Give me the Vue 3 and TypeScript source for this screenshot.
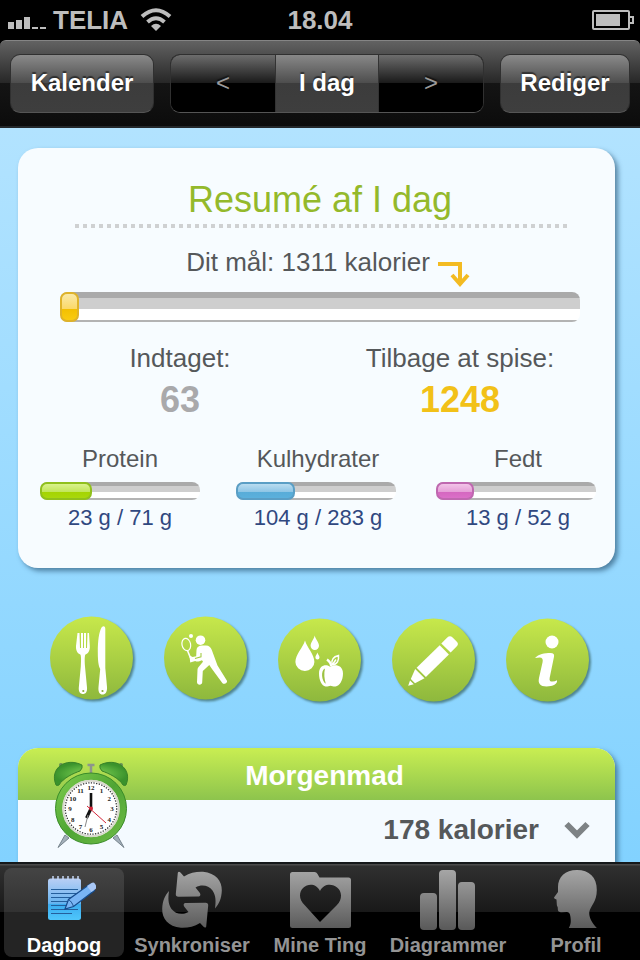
<script setup lang="ts">
import { ref } from 'vue'

interface Macro {
  name: string
  tone: string
  percent: number
  amount: string
}

const macros: Macro[] = [
  { name: 'Protein', tone: 'green', percent: 32.5, amount: '23 g / 71 g' },
  { name: 'Kulhydrater', tone: 'blue', percent: 36.8, amount: '104 g / 283 g' },
  { name: 'Fedt', tone: 'pink', percent: 24, amount: '13 g / 52 g' },
]
const intakePercent = 3.7

const actions = [
  { id: 'food', label: 'Mad', cy: 42 },
  { id: 'sport', label: 'Motion', cy: 42 },
  { id: 'water', label: 'Vand og frugt', cy: 44 },
  { id: 'note', label: 'Notat', cy: 44 },
  { id: 'info', label: 'Info', cy: 44 },
]

const tabs = [
  { id: 'diary', label: 'Dagbog' },
  { id: 'sync', label: 'Synkroniser' },
  { id: 'things', label: 'Mine Ting' },
  { id: 'charts', label: 'Diagrammer' },
  { id: 'profile', label: 'Profil' },
]
const activeTab = ref('diary')

const hours = Array.from({ length: 12 }, (_, i) => {
  const angle = ((i + 1) * Math.PI) / 6
  return { n: i + 1, x: 38 + 21 * Math.sin(angle), y: 50 - 21 * Math.cos(angle) }
})
</script>

<template>
  <div class="phone">
    <div class="status">
      <div class="carrier">
        <svg class="signal" width="38" height="14" viewBox="0 0 38 14" aria-hidden="true">
          <path d="M0 7h6v7H0zM8 5h6v9H8zM16 2h6v12h-6zM24 12h6v2h-6zM32 12h6v2h-6z" />
        </svg>
        <span>TELIA</span>
        <svg class="wifi" width="32" height="24" viewBox="0 0 32 24" aria-hidden="true">
          <path d="M2 8.500Q16-4 30 8.500M7.500 14Q16 6.500 24.500 14" fill="none" stroke="#bdbdbd" stroke-width="4" />
          <path d="M16 23l-5-5q5-4.500 10 0z" />
        </svg>
      </div>
      <span>18.04</span>
      <svg class="battery" width="42" height="20" viewBox="0 0 42 20" aria-hidden="true">
        <rect x="1" y="1" width="36" height="18" rx="1" fill="none" stroke="#bdbdbd" stroke-width="2" />
        <path d="M4 4h24v12H4z" />
        <path d="M37 7h4v6h-4" fill="none" stroke="#bdbdbd" stroke-width="2" />
      </svg>
    </div>

    <header class="nav">
      <button type="button" class="glossy">Kalender</button>
      <div class="segments">
        <button type="button" class="arrow">&lt;</button>
        <button type="button" class="current">I dag</button>
        <button type="button" class="arrow">&gt;</button>
      </div>
      <button type="button" class="glossy">Rediger</button>
    </header>

    <main>
      <section class="card">
        <h1>Resumé af I dag</h1>
        <div class="dots"></div>
        <div class="goal">
          <span>Dit mål: 1311 kalorier</span>
          <svg width="32" height="26" viewBox="0 0 32 26" aria-hidden="true">
            <path d="M0 2h22v20M14 13l8 9 8-9" fill="none" stroke="#f3bb22" stroke-width="4" />
          </svg>
        </div>
        <div class="bar large" role="progressbar" aria-label="Indtaget" :aria-valuenow="63" :aria-valuemax="1311">
          <div class="fill yellow" :style="{ width: intakePercent + '%' }"></div>
        </div>
        <div class="totals">
          <div><p>Indtaget:</p><strong>63</strong></div>
          <div class="left"><p>Tilbage at spise:</p><strong>1248</strong></div>
        </div>
        <div class="macros">
          <div v-for="m in macros" :key="m.name" class="macro">
            <p>{{ m.name }}</p>
            <div class="bar" role="progressbar" :aria-label="m.name" :aria-valuenow="m.percent">
              <div class="fill" :class="m.tone" :style="{ width: m.percent + '%' }"></div>
            </div>
            <p class="amount">{{ m.amount }}</p>
          </div>
        </div>
      </section>

      <div class="actions">
        <button v-for="a in actions" :key="a.id" type="button" :aria-label="a.label">
          <svg width="84" height="88" viewBox="0 0 84 88" aria-hidden="true">
            <defs>
              <linearGradient :id="'disc-' + a.id" x1="0" y1="0" x2="0" y2="1">
                <stop offset="0" stop-color="#c7e84b" />
                <stop offset="1" stop-color="#8eb83d" />
              </linearGradient>
            </defs>
            <circle class="disc" cx="41.500" :cy="a.cy" r="41.500" :fill="`url(#disc-${a.id})`" />
            <g v-if="a.id === 'food'" fill="#fff">
              <path d="M27.500 17h2l.5 15h1V17h2v15h1V17h2v15h1l.5-15h1.500l.8 13c.3 5-1.800 7.500-4.300 8.500-.9 1-.9 5-.5 12l2 21c.4 4.500-1.500 6.500-4 6.500s-4.600-2-4.200-6.500l2-21c.4-7 .4-11-.5-12-2.500-1-4.600-3.500-4.300-8.500z" />
              <path d="M51.500 11.500c2-2.200 3.800-1.500 3.800 1.500v39l1.700 19c.4 5-1.700 7.500-4.500 7.500S48 76 48.500 71l1.700-18c-1-2-2.400-5-2.400-17 0-11 1.200-20 3.700-24.500z" />
              <circle cx="33.300" cy="75" r="1.100" fill="#8eae3c" />
              <circle cx="52.500" cy="75" r="1.100" fill="#8eae3c" />
            </g>
            <g v-else-if="a.id === 'sport'" fill="#fff">
              <circle cx="27" cy="20" r="2" />
              <circle cx="36.500" cy="24.200" r="4.800" />
              <ellipse cx="22.300" cy="28.500" rx="4.300" ry="6.200" transform="rotate(-12 22.300 28.500)" fill="none" stroke="#fff" stroke-width="1.200" />
              <path d="M23.500 34.500l3 7.500" stroke="#fff" stroke-width="1.600" />
              <path d="M25.500 39.500l3.200 1.500 3.500-.7.300-6.300c.2-3 2.500-4.500 5.500-4.500h4c3 0 4.600 1.600 5.800 4.500l5.700 15.500 9.300 15c1.300 2.300-2.800 4.700-4.500 2.500L48 53l-2.700-4-6.500 6-.6 11.500c-.3 3-5.200 2.800-5.200-.3l.5-12.500c.1-1.500.6-2.400 1.500-3.300l4-4.700-1-1.500-2.600 1c-1.800.6-3 .5-4.200-.3l-5 1.500z" />
              <path d="M31 42.500l6-1.700V37" fill="none" stroke="#a5cc44" stroke-width="1.100" />
            </g>
            <g v-else-if="a.id === 'water'" fill="#fff">
              <path d="M27 24.500c2 7 9.400 14 9.400 21.500a9.500 9 0 0 1-19 0c0-7.500 7.600-14.500 9.600-21.500z" />
              <path d="M36.700 19.500c.8 4 4.300 6.500 4.300 10.300a4.200 4.200 0 0 1-8.400 0c0-3.800 3.300-6.300 4.100-10.300z" />
              <path d="M39.400 36.500c.4 2 2.100 3 2.100 4.900a2 2 0 0 1-4.100 0c0-1.900 1.600-2.900 2-4.900z" />
              <path d="M52.300 51c3.500-3 12.700-2.500 12.700 6.500 0 7-3.500 12.500-7.500 13-2 .3-3.300-.8-5-.8s-3 1.100-5 .8c-3.500-.5-6.500-6-6.500-13 0-9 8-9.500 11.300-6.500z" />
              <path d="M47 52.500c-4.500 2-3.500 12.500.8 15.300-1.500-5-2-10.300-.8-15.300z" fill="#9cc241" />
              <path d="M53 50.500c.3-3-1.300-5-4-7" fill="none" stroke="#fff" stroke-width="2.200" />
              <path d="M54 49c-1-5.500 2-8.500 6.500-9.500.5 5-1 9-6.500 9.500zM54.500 48.500l3.500-5" fill="none" stroke="#fff" stroke-width="1.500" />
            </g>
            <g v-else-if="a.id === 'note'" fill="#fff">
              <path d="M49.300 27.500l6-6c1.800-1.800 3.500-1.800 5.300 0l4 4c1.800 1.800 1.800 3.200 0 5l-6 6z" />
              <path d="M47.700 29.200l9.200 9.200-23 22.500-9.300-9.200z" />
              <path d="M23.200 53l9.300 9.300-9.500 5-4.200-4.200z" />
              <path d="M18 64.500l3.800 3.700-5.600 1.500z" />
            </g>
            <g v-else fill="#fff">
              <circle cx="46" cy="26" r="6.500" />
              <path d="M29 42c3.500-4 9.500-5 15.500-5 3 0 4 1.200 3.500 3.700l-4.300 21c-.6 3 .5 4 2.800 3.900 1.700-.1 3-.6 4.500-1.300.8 3.400-4 6.200-10.500 6.200-6.300 0-8.700-3-7.500-8.500l3.600-16c.7-3.200-.5-4.500-3-4.600-1.500 0-3 .2-4.600.6z" />
            </g>
          </svg>
        </button>
      </div>

      <section class="meal">
        <h2>Morgenmad</h2>
        <button type="button" class="meal-row">
          <span>178 kalorier</span>
          <svg width="26" height="18" viewBox="0 0 26 18" aria-hidden="true">
            <path d="M2.500 3L13 13.500 23.500 3" fill="none" stroke="#7d8285" stroke-width="6" />
          </svg>
        </button>
        <svg class="clock" width="76" height="88" viewBox="0 0 76 88" aria-hidden="true">
          <defs>
            <linearGradient id="ring" x1="0" y1="0" x2="1" y2="1">
              <stop offset="0" stop-color="#7bcb4c" />
              <stop offset=".5" stop-color="#4fa534" />
              <stop offset="1" stop-color="#6dba45" />
            </linearGradient>
            <radialGradient id="bell">
              <stop offset="0" stop-color="#8cd35b" />
              <stop offset=".65" stop-color="#55ad3c" />
              <stop offset="1" stop-color="#3a922c" />
            </radialGradient>
          </defs>
          <path d="M12 74L5 86.500 16 77zM64 74l7 12.500L60 77z" fill="#a3afba" stroke="#77848d" />
          <path d="M38 5v10M34.500 4h7" fill="none" stroke="#8d958c" stroke-width="2.500" />
          <circle cx="8" cy="4" r="2" fill="#668f55" />
          <circle cx="68" cy="4" r="2" fill="#668f55" />
          <path d="M3 24C-4 7 13-4 29 4q1 3-2 6C21 12 10 17 6 24q-2 1-3 0zM73 24C80 7 63-4 47 4q-1 3 2 6c6 2 17 7 21 14q2 1 3 0z" fill="url(#bell)" stroke="#388329" />
          <circle cx="38" cy="47.500" r="32" fill="#fff" stroke="url(#ring)" stroke-width="7" />
          <circle cx="38" cy="47.500" r="35.500" fill="none" stroke="#3a8c29" />
          <circle cx="38" cy="47.500" r="27.800" fill="none" stroke="#d8d9cd" stroke-width="2" />
          <circle cx="38" cy="47.500" r="25.700" fill="none" stroke="#333" stroke-width="1.300" stroke-dasharray="1.300 1.370" />
          <text v-for="h in hours" :key="h.n" :x="h.x" :y="h.y" class="hour">{{ h.n }}</text>
          <path d="M38 47.500V32" stroke="#111" stroke-width="2.600" />
          <path d="M38 47.500L33.500 57" stroke="#111" stroke-width="3" />
          <path d="M35 54l-3 12" stroke="#888" />
          <path d="M34 45l19 17" stroke="#d52639" />
          <circle cx="38" cy="47.500" r="2" fill="#d52639" />
        </svg>
      </section>
    </main>

    <nav class="tabs">
      <button v-for="t in tabs" :key="t.id" type="button" :class="{ active: activeTab === t.id }" @click="activeTab = t.id">
        <svg width="64" height="60" viewBox="0 0 64 60" aria-hidden="true">
          <defs>
            <linearGradient :id="'tab-' + t.id" gradientUnits="userSpaceOnUse" x1="0" y1="0" x2="0" y2="60">
              <stop offset="0" stop-color="#a6a6a6" />
              <stop offset="1" stop-color="#595959" />
            </linearGradient>
          </defs>
          <g v-if="t.id === 'diary'">
            <linearGradient id="pad" x1="0" y1="0" x2="0" y2="1">
              <stop offset="0" stop-color="#b9cff5" />
              <stop offset=".6" stop-color="#68b4f0" />
              <stop offset=".62" stop-color="#3bacf0" />
              <stop offset="1" stop-color="#4fc6fb" />
            </linearGradient>
            <rect x="16" y="8.500" width="33" height="41.500" rx="2.500" fill="url(#pad)" />
            <path d="M21 6v4M26 6v4M31 6v4M36 6v4M41 6v4M46 6v4" stroke="#c5d6f5" stroke-width="1.500" />
            <path d="M19 19.500h27M19 23.500h27M19 27.500h27M19 31.500h22M19 35.500h17M19 39.500h27M19 43.500h21" stroke="#245f9c" />
            <path d="M33 39l3.500-9.500L58 14l4.500 6.500L41.500 36.500z" fill="#79b5f5" stroke="#164c8d" stroke-width="1.200" />
            <path d="M55 16l4.500-3c1.500-1 2.500-.6 3.500.8l1 1.600c1 1.500.6 2.600-.5 3.500l-4 3z" fill="#a9c8f6" />
            <path d="M36.500 29.500c2 1 4 4 5 7" fill="none" stroke="#164c8d" />
          </g>
          <g v-else-if="t.id === 'sync'" :fill="`url(#tab-${t.id})`">
            <path d="M17.700 4c0-2.500 1.500-2.800 3-1.200L24 6.500C30 2.500 36 1.500 43 1.700 56 3 62 11 61.800 20.500 61.500 29 59 34 55 38.500c1-7 1-13-2.500-18-4-5-10.500-6.500-17-3l4 5c1.500 2 1 4-1.500 4l-19.500.2c-2 0-2.800-.9-2.700-2.700z" />
            <path d="M46.300 55.400c0 2.500-1.500 2.800-3 1.200L40 52.900C34 56.900 28 57.900 21 57.700 8 56.400 2 48.400 2.200 38.900 2.500 30.400 5 25.400 9 20.900c-1 7-1 13 2.500 18 4 5 10.500 6.500 17 3l-4-5c-1.500-2-1-4 1.500-4l19.500-.2c2 0 2.800.9 2.700 2.700z" />
          </g>
          <path v-else-if="t.id === 'things'" :fill="`url(#tab-${t.id})`" fill-rule="evenodd" d="M4.500 2h22q2 0 3 2l2 3.500h29Q63 7.500 63 10v45.500q0 2.500-2.500 2.500h-56Q2 58 2 55.500v-51Q2 2 4.500 2zM32 52l16.500-16.500C52 32 53 29 53 25.500c0-11-16-15.500-21-4.500-5-11-20-6.500-20 4.500 0 3.500 1.500 6.500 5 10z" />
          <path v-else-if="t.id === 'charts'" :fill="`url(#tab-${t.id})`" d="M8 23h9q4 0 4 4v29q0 4-4 4H8q-4 0-4-4V27q0-4 4-4zM27 0h9q4 0 4 4v52q0 4-4 4h-9q-4 0-4-4V4q0-4 4-4zM46 12h9q4 0 4 4v40q0 4-4 4h-9q-4 0-4-4V16q0-4 4-4z" />
          <path v-else :fill="`url(#tab-${t.id})`" d="M33 0C21 0 14 7 14 17v5l-4 5.500q0 1.500 2.500 2l.3 5c0 2 1.200 2 1 4 0 3 1 3.700 4 3.700l5-.2c2 0 3 1 3.500 4 .8 5 .8 8-1.500 12h28c-5-5-8-11-7.500-16 1-6 7.500-10 7.500-22C53 7 45 0 33 0z" />
        </svg>
        <span>{{ t.label }}</span>
      </button>
    </nav>
  </div>
</template>

<style>
body {
  margin: 0;
}
</style>

<style scoped>
.phone {
  display: flex;
  flex-direction: column;
  height: 100vh;
  overflow: hidden;
  background: #000;
  font-family: "Liberation Sans", Arial, sans-serif;
  color: #55585a;
}
button {
  margin: 0;
  padding: 0;
  border: 0;
  background: none;
  font: inherit;
  color: inherit;
  text-shadow: inherit;
  cursor: pointer;
}
h1, h2, p {
  margin: 0;
  font-weight: normal;
}
svg {
  display: block;
}

.status {
  display: grid;
  grid-template-columns: 1fr auto 1fr;
  align-items: center;
  height: 40px;
  padding: 0 8px;
  box-sizing: border-box;
  font-size: 26px;
  font-weight: bold;
  color: #bdbdbd;
  fill: #bdbdbd;
}
.carrier {
  display: flex;
  align-items: center;
  gap: 7px;
}
.signal {
  align-self: flex-end;
  margin-bottom: 7px;
}
.wifi {
  margin-left: 5px;
}
.battery {
  justify-self: end;
  margin-right: -2px;
}

.nav {
  display: grid;
  grid-template-columns: 144px 1fr 130px;
  gap: 16px;
  align-items: center;
  height: 88px;
  flex-shrink: 0;
  padding: 0 10px 1px;
  box-sizing: border-box;
  border-top: 1px solid #858585;
  border-bottom: 2px solid #24282b;
  border-radius: 6px 6px 0 0;
  background: linear-gradient(#626262, #262626 50%, #141414 50%, #0c0c0c);
  font-size: 24px;
  font-weight: bold;
  color: #fff;
  text-shadow: 0 -2px 1px rgba(0, 0, 0, 0.5);
}
.glossy, .segments {
  height: 59px;
  box-sizing: border-box;
  border: 1px solid #303030;
  border-bottom-color: #555;
  border-radius: 10px;
}
.glossy {
  background: linear-gradient(#8a8a8a, #4c4c4c 50%, #3c3c3c 50%, #3e3e3e);
}
.segments {
  display: grid;
  grid-template-columns: 1fr 1fr 1fr;
  overflow: hidden;
  background: #000;
}
.arrow {
  font-weight: normal;
  color: #9a9a9a;
  background: linear-gradient(#6d6d6d, #181818 50%, #000 50%);
}
.current {
  border-left: 1px solid #333;
  border-right: 1px solid #333;
  background: linear-gradient(#888, #4c4c4c 50%, #3c3c3c 50%, #3e3e3e);
}

main {
  flex: 1;
  min-height: 0;
  overflow: hidden;
  padding: 20px 25px 0 18px;
  background: linear-gradient(#b2e3ff, #82d2ff);
}
.card {
  padding: 30px 15px 36px 22px;
  border-radius: 20px;
  background: #f7fcff;
  box-shadow: 3px 3px 5px rgba(30, 70, 100, 0.6);
  text-align: center;
  font-size: 26px;
  line-height: 32px;
}
h1 {
  font-size: 36px;
  line-height: 44px;
  color: #94b92b;
}
.dots {
  height: 4px;
  margin: 2px 33px 0 35px;
  background: repeating-linear-gradient(90deg, #cfd1d2 0 4px, transparent 4px 8px);
}
.goal {
  display: flex;
  justify-content: center;
  gap: 8px;
  margin-top: 18px;
  padding-left: 16px;
}
.goal svg {
  align-self: flex-end;
  margin-bottom: -10px;
}
.bar {
  height: 18px;
  border-radius: 8px;
  background: linear-gradient(#aaa 0 4px, #cecece 4px 10px, #fff 10px 16px, #b3b3b3 16px);
}
.bar.large {
  height: 30px;
  margin: 14px 20px 0;
  background: linear-gradient(#aaa 0 6px, #cecece 6px 17px, #fff 17px 28px, #b3b3b3 28px);
}
.fill {
  height: 100%;
  box-sizing: border-box;
  border: 2px solid;
  border-radius: 7px;
}
.yellow {
  border-color: #dfb32a;
  background: linear-gradient(#fae9a8, #fbd96a 56%, #f3bf00 56%, #f9cb10);
}
.green {
  border-color: #90c01c;
  background: linear-gradient(#daf28c, #c2e65c 55%, #a4d400 55%, #a9d80c);
}
.blue {
  border-color: #5a9ec5;
  background: linear-gradient(#b9dcf0, #8fc6e6 55%, #58acd8 55%, #5bb0dc);
}
.pink {
  border-color: #bf68b0;
  background: linear-gradient(#f2c4e8, #e6a0d8 55%, #d466bf 55%, #db70c8);
}
.totals {
  display: grid;
  grid-template-columns: 1fr 1fr;
  margin-top: 20px;
}
.totals strong {
  display: block;
  margin-top: 4px;
  font-size: 36px;
  line-height: 44px;
  color: #a9a9ab;
}
.totals .left strong {
  color: #f2c118;
}
.macros {
  display: grid;
  grid-template-columns: 160fr 164fr 164fr;
  gap: 36px;
  margin-top: 22px;
}
.macro {
  font-size: 24px;
  line-height: 30px;
  white-space: nowrap;
}
.macro .bar {
  max-width: 160px;
  margin-top: 8px;
}
.macro .amount {
  margin-top: 4px;
  font-size: 22px;
  line-height: 28px;
  color: #30487f;
}

.actions {
  display: flex;
  justify-content: center;
  gap: 30px;
  margin-top: 48px;
  padding-left: 7px;
}
.actions svg {
  overflow: visible;
}
.disc {
  filter: drop-shadow(2px 2px 1px rgba(40, 80, 70, 0.6));
}

.meal {
  position: relative;
  height: 180px;
  margin-top: 44px;
  border-radius: 20px;
  overflow: hidden;
  background: #f4faff;
  box-shadow: 3px 3px 5px rgba(30, 70, 100, 0.6);
  font-size: 28px;
  font-weight: bold;
}
h2 {
  padding: 4px 0 0 16px;
  font-size: 28px;
  line-height: 48px;
  font-weight: bold;
  text-align: center;
  color: #fff;
  background: linear-gradient(#c9ee52, #8dc44d);
}
.meal-row {
  display: flex;
  justify-content: flex-end;
  align-items: center;
  gap: 25px;
  width: 100%;
  height: 60px;
  padding-right: 25px;
}
.clock {
  position: absolute;
  left: 35px;
  top: 13px;
}
.hour {
  font: bold 7px "Liberation Serif", serif;
  text-anchor: middle;
  fill: #222;
}

.tabs {
  display: grid;
  grid-template-columns: repeat(5, 1fr);
  gap: 8px;
  height: 98px;
  flex-shrink: 0;
  padding: 4px;
  box-sizing: border-box;
  border-top: 2px solid #15181a;
  background: linear-gradient(#4a4a4a 0 1px, #303030 2px, #191919 48px, #000 48px);
  font-size: 20px;
  line-height: 24px;
  font-weight: bold;
  color: #949494;
}
.tabs button {
  display: flex;
  flex-direction: column;
  align-items: center;
  gap: 3px;
  padding-top: 2px;
  border-radius: 8px;
  white-space: nowrap;
}
.tabs .active {
  color: #fff;
  background: linear-gradient(#444, #323232 44px, #242424 44px);
}
</style>
